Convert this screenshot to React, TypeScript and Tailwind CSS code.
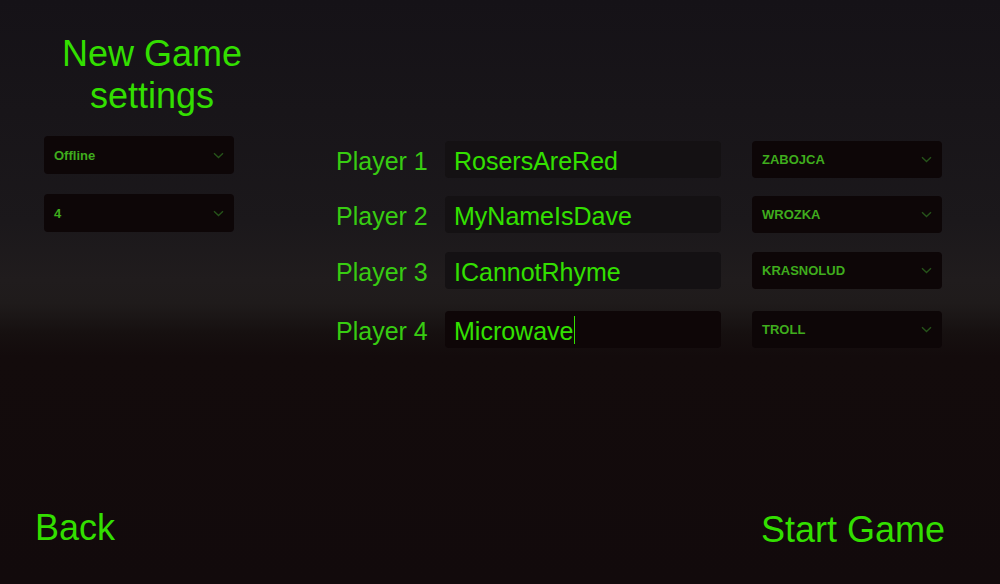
import React from "react";

const players = [
  { label: "Player 1", name: "RosersAreRed", race: "ZABOJCA", row: "mt-0", focused: false },
  { label: "Player 2", name: "MyNameIsDave", race: "WROZKA", row: "mt-[18px]", focused: false },
  { label: "Player 3", name: "ICannotRhyme", race: "KRASNOLUD", row: "mt-[19px]", focused: false },
  { label: "Player 4", name: "Microwave", race: "TROLL", row: "mt-[22px]", focused: true },
];

function Chevron() {
  return (
    <svg width="11" height="7" viewBox="0 0 11 7" className="shrink-0">
      <path d="M1 1.2 L5.5 5.5 L10 1.2" fill="none" stroke="#26531a" strokeWidth="1.4" />
    </svg>
  );
}

function Dropdown({ value, h }: { value: string; h: string }) {
  return (
    <div className={`flex w-[190px] items-center justify-between rounded-[4px] bg-[#0d0607] pl-[10px] pr-[10px] ${h}`}>
      <span className="pt-[1px] text-[13px] font-bold text-[#3fac1d]">{value}</span>
      <Chevron />
    </div>
  );
}

export default function App() {
  return (
    <div
      className="flex h-[584px] w-full flex-col overflow-hidden bg-[linear-gradient(to_bottom,#151217_0%,#1b181b_38%,#201c1d_48%,#1f1b1b_52%,#161010_57%,#130b0c_61%,#120a0c_100%)]"
      style={{ fontFamily: '"Liberation Sans", Arial, sans-serif' }}
    >
      <div className="flex">
        {/* left column */}
        <div className="w-[336px] shrink-0 pl-[44px] pt-[33px]">
          <div className="-ml-[12px] w-[240px] text-center text-[36px] leading-[42px] text-[#33df00]">
            New Game
            <br />
            settings
          </div>
          <div className="mt-[19px]">
            <Dropdown value="Offline" h="h-[38px]" />
          </div>
          <div className="mt-[20px]">
            <Dropdown value="4" h="h-[38px]" />
          </div>
        </div>

        {/* player rows */}
        <div className="flex flex-col pt-[141px]">
          {players.map((p) => (
            <div key={p.label} className={`flex items-center ${p.row}`}>
              <div className="w-[109px] pt-[3px] text-[25px] leading-none text-[#38cc12]">{p.label}</div>
              <div
                className={`flex h-[37px] w-[276px] items-center rounded-[4px] pl-[9px] pt-[3px] ${
                  p.focused ? "bg-[#0e0607]" : "bg-[#141113]"
                }`}
              >
                <span className="text-[25px] leading-none text-[#33e000]">{p.name}</span>
                {p.focused && <span className="-mt-[3px] ml-[1px] h-[28px] w-[1px] bg-[#33e000]" />}
              </div>
              <div className="ml-[31px]">
                <Dropdown value={p.race} h="h-[37px]" />
              </div>
            </div>
          ))}
        </div>
      </div>

      {/* bottom buttons */}
      <div className="mt-auto flex items-center justify-between pb-[34px] pl-[35px] pr-[55px]">
        <div className="text-[36px] leading-[40px] text-[#33df00]">Back</div>
        <div className="mt-[5px] text-[36px] leading-[40px] text-[#33df00]">Start Game</div>
      </div>
    </div>
  );
}
